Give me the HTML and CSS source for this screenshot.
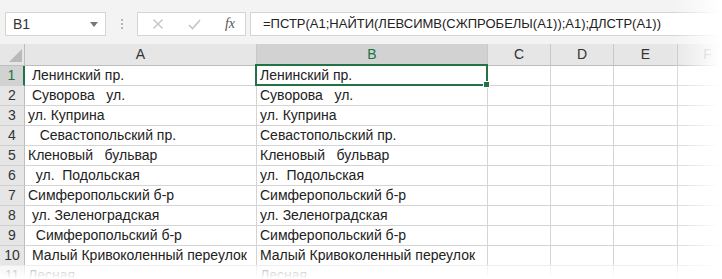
FILE: index.html
```
<!DOCTYPE html>
<html lang="ru">
<head>
<meta charset="UTF-8" />
<title>Excel</title>
<link rel="stylesheet" href="styles.css">
</head>
<body>
<div class="app">
  <div class="toolbar">
    <div class="namebox">
      <span>B1</span>
      <svg class="caret" width="8" height="5" viewBox="0 0 8 5"><path d="M0 0h8L4 5z" fill="#777"/></svg>
    </div>
    <div class="grip"></div>
    <div class="fxbox">
      <svg width="12" height="12" viewBox="0 0 12 12"><path d="M1.5 1.5l9 9M10.5 1.5l-9 9" stroke="#c4c4c4" stroke-width="1.4"/></svg>
      <svg width="13" height="11" viewBox="0 0 13 11"><path d="M1 6l3.5 3.5L12 1" stroke="#c4c4c4" stroke-width="1.6" fill="none"/></svg>
      <span class="fx">fx</span>
    </div>
    <div class="formula">=ПСТР(A1;НАЙТИ(ЛЕВСИМВ(СЖПРОБЕЛЫ(A1));A1);ДЛСТР(A1))</div>
  </div>

  <div class="sheet">
    <div class="row head">
      <div class="corner"><svg width="13" height="13" viewBox="0 0 13 13"><path d="M13 0v13H0z" fill="#b9b9b9"/></svg></div>
      <div class="ch">A</div><div class="ch sel">B</div><div class="ch">C</div><div class="ch">D</div><div class="ch">E</div><div class="ch dim">F</div>
    </div>
    <div class="row"><div class="rh sel">1</div><div class="c"> Ленинский пр.</div><div class="c active">Ленинский пр.</div><div class="c"></div><div class="c"></div><div class="c"></div><div class="c"></div></div>
    <div class="row"><div class="rh">2</div><div class="c"> Суворова   ул.</div><div class="c">Суворова   ул.</div><div class="c"></div><div class="c"></div><div class="c"></div><div class="c"></div></div>
    <div class="row"><div class="rh">3</div><div class="c">ул. Куприна</div><div class="c">ул. Куприна</div><div class="c"></div><div class="c"></div><div class="c"></div><div class="c"></div></div>
    <div class="row"><div class="rh">4</div><div class="c">   Севастопольский пр.</div><div class="c">Севастопольский пр.</div><div class="c"></div><div class="c"></div><div class="c"></div><div class="c"></div></div>
    <div class="row"><div class="rh">5</div><div class="c">Кленовый   бульвар</div><div class="c">Кленовый   бульвар</div><div class="c"></div><div class="c"></div><div class="c"></div><div class="c"></div></div>
    <div class="row"><div class="rh">6</div><div class="c">  ул.  Подольская</div><div class="c">ул.  Подольская</div><div class="c"></div><div class="c"></div><div class="c"></div><div class="c"></div></div>
    <div class="row"><div class="rh">7</div><div class="c">Симферопольский б-р</div><div class="c">Симферопольский б-р</div><div class="c"></div><div class="c"></div><div class="c"></div><div class="c"></div></div>
    <div class="row"><div class="rh">8</div><div class="c"> ул. Зеленоградская</div><div class="c">ул. Зеленоградская</div><div class="c"></div><div class="c"></div><div class="c"></div><div class="c"></div></div>
    <div class="row"><div class="rh">9</div><div class="c">  Симферопольский б-р</div><div class="c">Симферопольский б-р</div><div class="c"></div><div class="c"></div><div class="c"></div><div class="c"></div></div>
    <div class="row"><div class="rh">10</div><div class="c"> Малый Кривоколенный переулок</div><div class="c">Малый Кривоколенный переулок</div><div class="c"></div><div class="c"></div><div class="c"></div><div class="c"></div></div>
    <div class="row"><div class="rh">11</div><div class="c">Лесная</div><div class="c">Лесная</div><div class="c"></div><div class="c"></div><div class="c"></div><div class="c"></div></div>
  </div>

  <div class="fade-right"></div>
  <div class="fade-bottom"></div>
</div>
</body>
</html>
```

FILE: styles.css
```
body {
  margin: 0;
  background: #fff;
  font-family: 'Liberation Sans', Arial, sans-serif;
  color: #222;
}
.app {
  position: relative;
  width: 722px;
  height: 279px;
  overflow: hidden;
}

/* toolbar */
.toolbar {
  display: flex;
  align-items: center;
  height: 44px;
  background: #f3f3f3;
  padding-left: 5px;
  box-sizing: border-box;
  padding-top: 4px;
}
.namebox {
  display: flex;
  align-items: center;
  justify-content: space-between;
  width: 101px;
  height: 24px;
  box-sizing: border-box;
  background: #fff;
  border: 1px solid #d4d4d4;
  padding: 0 7px 0 7px;
  font-size: 14px;
  color: #333;
}
.grip {
  width: 2px;
  height: 10px;
  margin: 0 14px 0 15px;
  background: repeating-linear-gradient(#b5b5b5 0 2px, transparent 2px 4px);
}
.fxbox {
  display: flex;
  align-items: center;
  justify-content: space-between;
  width: 109px;
  height: 24px;
  box-sizing: border-box;
  background: #fff;
  border: 1px solid #d4d4d4;
  padding: 0 10px 0 14px;
}
.fx {
  font-family: 'Liberation Serif', serif;
  font-style: italic;
  font-size: 14px;
  color: #555;
}
.formula {
  flex: 1;
  margin-left: 4px;
  height: 24px;
  box-sizing: border-box;
  background: #fff;
  border: 1px solid #d4d4d4;
  border-right: none;
  padding-left: 12px;
  line-height: 22px;
  font-size: 13px;
  color: #222;
  white-space: nowrap;
}

/* sheet */
.sheet {
  font-size: 14px;
}
.row {
  display: grid;
  grid-template-columns: 25px 232px 231px 63px 63px 64px 60px;
  height: 20px;
}
.row.head {
  height: 22px;
  background: #e6e6e6;
}
.corner {
  display: flex;
  align-items: flex-end;
  justify-content: flex-end;
  padding: 0 2px 3px 0;
  border-right: 1px solid #bdbdbd;
  border-bottom: 1px solid #bdbdbd;
}
.ch {
  text-align: center;
  line-height: 21px;
  color: #333;
  border-right: 1px solid #c8c8c8;
  border-bottom: 1px solid #bdbdbd;
}
.ch.sel {
  background: #d2d2d2;
  color: #217346;
  border-bottom: 2px solid #217346;
  line-height: 20px;
}
.ch.dim {
  color: #999;
}
.rh {
  background: #e6e6e6;
  text-align: center;
  line-height: 19px;
  color: #333;
  border-right: 1px solid #bdbdbd;
  border-bottom: 1px solid #d0d0d0;
}
.rh.sel {
  background: #d2d2d2;
  color: #217346;
  border-right: 2px solid #217346;
}
.c {
  position: relative;
  white-space: pre;
  overflow: hidden;
  padding-left: 3px;
  line-height: 19px;
  border-right: 1px solid #d4d4d4;
  border-bottom: 1px solid #d4d4d4;
  color: #222;
}
.c.active {
  overflow: visible;
}
.c.active::after {
  content: '';
  position: absolute;
  left: -2px;
  top: -2px;
  right: -1px;
  bottom: -1px;
  border: 2px solid #217346;
}
.c.active::before {
  content: '';
  position: absolute;
  right: -3px;
  bottom: -3px;
  width: 5px;
  height: 5px;
  background: #217346;
  border: 1px solid #fff;
  z-index: 1;
}

/* soft edges of the screenshot */
.fade-right {
  position: absolute;
  top: 0;
  right: 0;
  width: 50px;
  height: 100%;
  background: linear-gradient(to right, rgba(255,255,255,0), #fff 95%);
}
.fade-bottom {
  position: absolute;
  left: 0;
  bottom: 0;
  width: 100%;
  height: 14px;
  background: linear-gradient(rgba(255,255,255,0.6), #fff);
}
```
